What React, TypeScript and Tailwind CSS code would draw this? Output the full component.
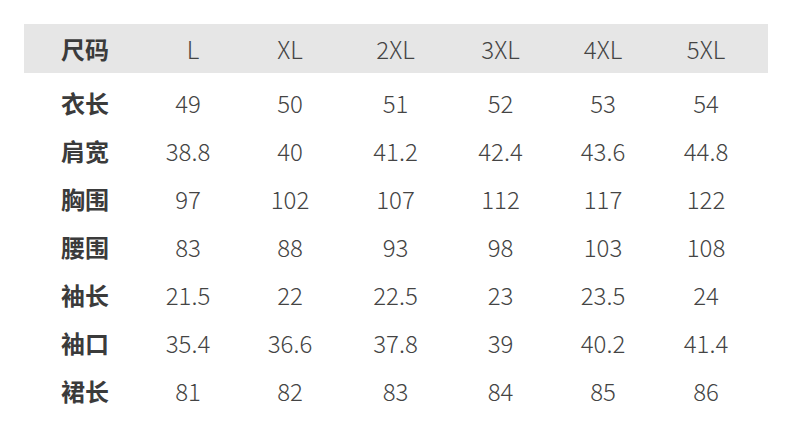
const HEAD = ['L', 'XL', '2XL', '3XL', '4XL', '5XL'];

const ROWS: [string, string[]][] = [
  ['衣长', ['49', '50', '51', '52', '53', '54']],
  ['肩宽', ['38.8', '40', '41.2', '42.4', '43.6', '44.8']],
  ['胸围', ['97', '102', '107', '112', '117', '122']],
  ['腰围', ['83', '88', '93', '98', '103', '108']],
  ['袖长', ['21.5', '22', '22.5', '23', '23.5', '24']],
  ['袖口', ['35.4', '36.6', '37.8', '39', '40.2', '41.4']],
  ['裙长', ['81', '82', '83', '84', '85', '86']],
];

const GRID = 'grid grid-cols-[114px_100px_104px_107px_103px_102px_104px] items-center';

export default function App() {
  return (
    <div
      className="w-[790px] h-[430px] bg-white pt-6 pl-6 text-[24px] text-[#444]"
      style={{ fontFamily: '"Noto Sans CJK SC", "Noto Sans", sans-serif' }}
    >
      <div className={`${GRID} w-[744px] h-[49px] bg-[#e6e6e6]`}>
        <div className="pl-[37px] font-bold text-[#3b3b3b]">尺码</div>
        {HEAD.map((h, i) => (
          <div key={h} className={`text-center font-light ${i === 0 ? 'pl-[10px]' : ''}`}>{h}</div>
        ))}
      </div>
      <div className="mt-[6px]">
        {ROWS.map(([label, vals]) => (
          <div key={label} className={`${GRID} h-12`}>
            <div className="pl-[37px] font-bold text-[#3b3b3b]">{label}</div>
            {vals.map((v, i) => (
              <div key={i} className="text-center font-light">{v}</div>
            ))}
          </div>
        ))}
      </div>
    </div>
  );
}
